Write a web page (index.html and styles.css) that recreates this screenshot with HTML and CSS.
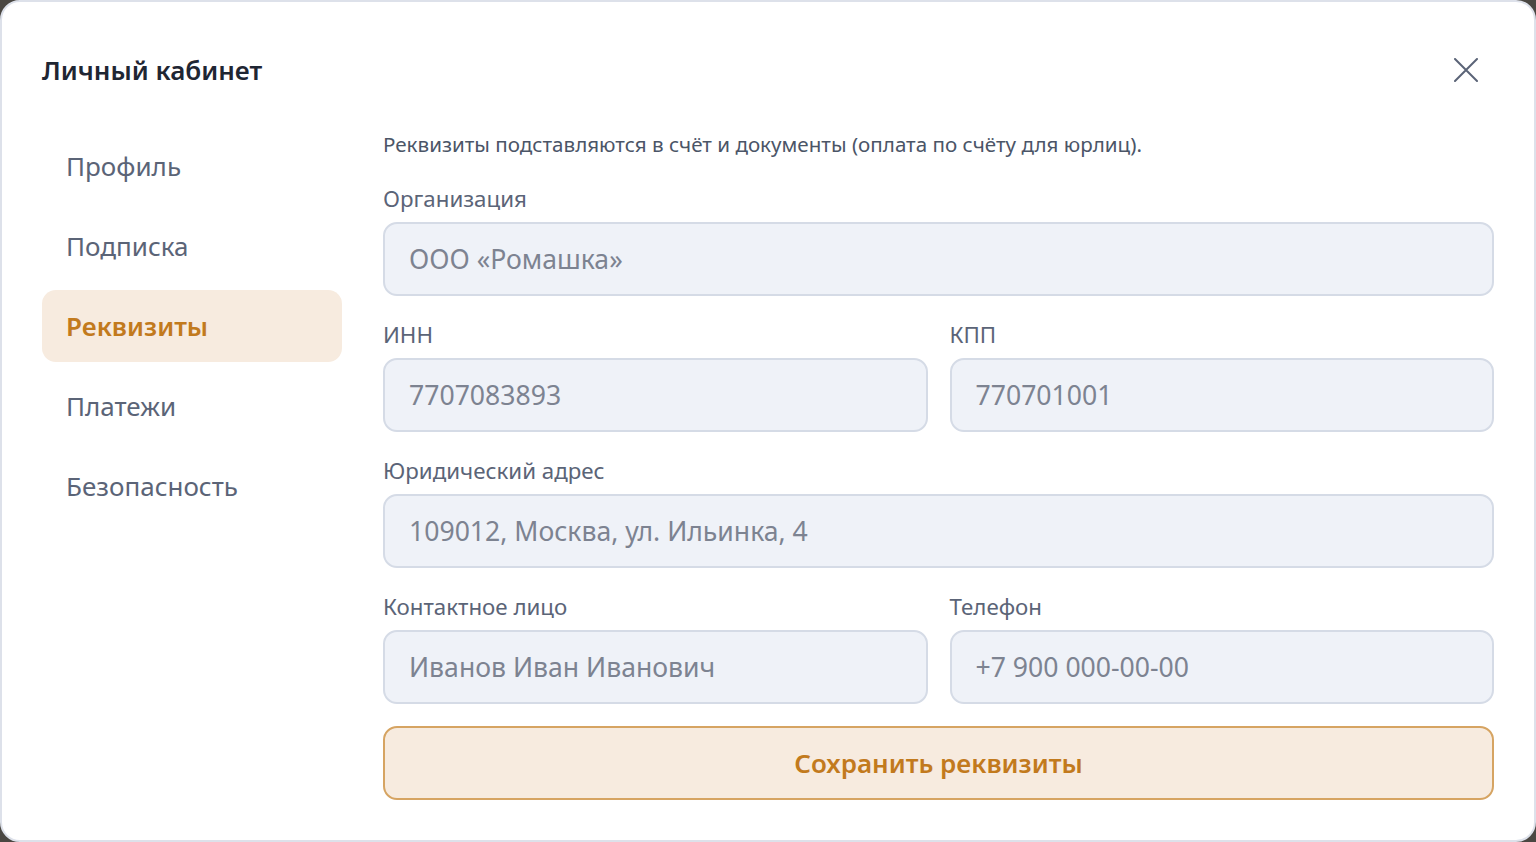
FILE: index.html
```
<!DOCTYPE html>
<html>
<head>
    <link rel="stylesheet" href="styles.css">
</head>
<body>
    <div class="modal">
        <div class="modal-header">
            <h1>Личный кабинет</h1>
            <button class="close-btn" aria-label="Закрыть">
                <svg width="24" height="24" viewBox="0 0 24 24" fill="none" stroke="currentColor" stroke-width="2" stroke-linecap="round">
                    <path d="M1 1L23 23M23 1L1 23"/>
                </svg>
            </button>
        </div>
        <div class="modal-body">
            <nav class="side-nav">
                <a class="nav-item">Профиль</a>
                <a class="nav-item">Подписка</a>
                <a class="nav-item active">Реквизиты</a>
                <a class="nav-item">Платежи</a>
                <a class="nav-item">Безопасность</a>
            </nav>
            <form class="details-form">
                <p class="form-note">Реквизиты подставляются в счёт и документы (оплата по счёту для юрлиц).</p>
                <label class="field wide">
                    <span class="field-label">Организация</span>
                    <input type="text" placeholder="ООО «Ромашка»">
                </label>
                <label class="field">
                    <span class="field-label">ИНН</span>
                    <input type="text" placeholder="7707083893">
                </label>
                <label class="field">
                    <span class="field-label">КПП</span>
                    <input type="text" placeholder="770701001">
                </label>
                <label class="field wide">
                    <span class="field-label">Юридический адрес</span>
                    <input type="text" placeholder="109012, Москва, ул. Ильинка, 4">
                </label>
                <label class="field">
                    <span class="field-label">Контактное лицо</span>
                    <input type="text" placeholder="Иванов Иван Иванович">
                </label>
                <label class="field">
                    <span class="field-label">Телефон</span>
                    <input type="text" placeholder="+7 900 000-00-00">
                </label>
                <button type="button" class="save-btn">Сохранить реквизиты</button>
            </form>
        </div>
    </div>
</body>
</html>
```

FILE: styles.css
```
* {
    box-sizing: border-box;
}
body {
    font-family: "Noto Sans", "Open Sans", sans-serif;
    margin: 0;
    background: #4a4742;
}
.modal {
    width: 100vw;
    height: 100vh;
    background: white;
    border: 2px solid #dde1ea;
    border-radius: 20px;
    padding: 40px;
    display: flex;
    flex-direction: column;
}
.modal-header {
    display: flex;
    justify-content: space-between;
    align-items: center;
    height: 56px;
    margin-bottom: 31px;
}
.modal-header h1 {
    font-size: 26px;
    font-weight: 600;
    color: #1f2633;
    margin: 0;
}
.close-btn {
    width: 56px;
    height: 48px;
    border: none;
    background: none;
    color: #5b6477;
    display: flex;
    align-items: center;
    justify-content: center;
    padding: 0;
}
.modal-body {
    display: flex;
    gap: 41px;
}
.side-nav {
    width: 300px;
    flex-shrink: 0;
    display: flex;
    flex-direction: column;
    gap: 8px;
    padding-top: 1px;
}
.nav-item {
    height: 72px;
    display: flex;
    align-items: center;
    padding: 0 24px;
    border-radius: 14px;
    font-size: 26px;
    color: #5b6477;
}
.nav-item.active {
    background: #f7ebdf;
    color: #c27a1d;
    font-weight: 600;
}
.details-form {
    flex: 1;
    display: grid;
    grid-template-columns: 1fr 1fr;
    gap: 22px;
}
.form-note {
    grid-column: 1 / -1;
    margin: 0;
    font-size: 20.6px;
    line-height: 31px;
    color: #4b5567;
}
.field {
    display: flex;
    flex-direction: column;
    gap: 6px;
}
.field.wide {
    grid-column: 1 / -1;
}
.field-label {
    font-size: 22.3px;
    line-height: 34px;
    color: #5b6477;
}
.field input {
    height: 74px;
    border: 2px solid #d5dbe6;
    border-radius: 14px;
    background: #eff2f8;
    padding: 0 24px;
    font-family: inherit;
    font-size: 26.6px;
    color: #1f2633;
}
.field input::placeholder {
    color: #7d8391;
}
.save-btn {
    grid-column: 1 / -1;
    height: 74px;
    border: 2px solid #d6a462;
    border-radius: 14px;
    background: #f7ebdf;
    color: #c27a1d;
    font-family: inherit;
    font-size: 26px;
    font-weight: 600;
}
```
